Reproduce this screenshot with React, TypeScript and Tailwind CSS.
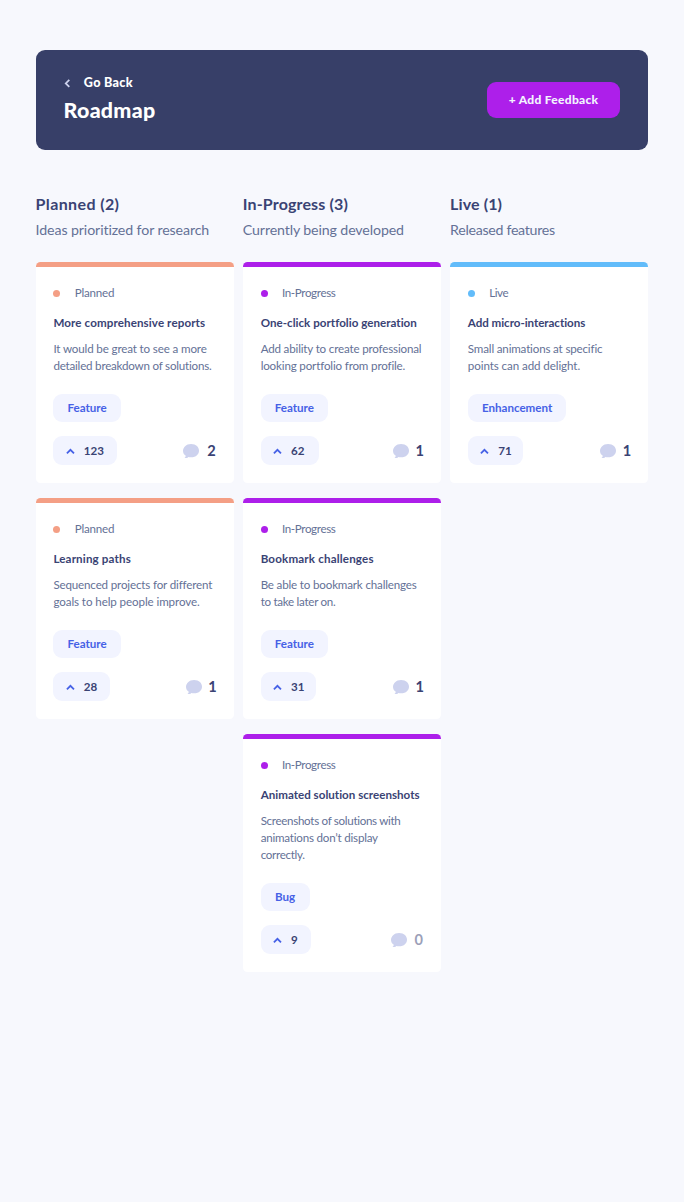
import React from "react";

type Request = {
  title: string;
  titleClass: string;
  lines: [string, string][];
  tag: string;
  tagClass: string;
  votes: number;
  votesClass: string;
  comments: number;
  commentsClass: string;
};

type Column = {
  name: string;
  nameClass: string;
  heading: string;
  headingClass: string;
  note: string;
  noteClass: string;
  bar: string;
  items: Request[];
};

const columns: Column[] = [
  {
    name: "Planned",
    nameClass: "tracking-[-0.2px]",
    heading: "Planned (2)",
    headingClass: "tracking-[0.38px]",
    note: "Ideas prioritized for research",
    noteClass: "tracking-[-0.11px]",
    bar: "bg-[#f49f85]",
    items: [
      {
        title: "More comprehensive reports",
        titleClass: "tracking-[0.11px]",
        lines: [
          ["It would be great to see a more", "tracking-[-0.14px]"],
          ["detailed breakdown of solutions.", "tracking-[-0.21px]"],
        ],
        tag: "Feature",
        tagClass: "w-[67.3px]",
        votes: 123,
        votesClass: "w-[63.3px]",
        comments: 2,
        commentsClass: "w-[9.4px]",
      },
      {
        title: "Learning paths",
        titleClass: "tracking-[0.15px]",
        lines: [
          ["Sequenced projects for different", "tracking-[-0.16px]"],
          ["goals to help people improve.", "tracking-[-0.09px]"],
        ],
        tag: "Feature",
        tagClass: "w-[67.3px]",
        votes: 28,
        votesClass: "w-[57px]",
        comments: 1,
        commentsClass: "w-[7.2px]",
      },
    ],
  },
  {
    name: "In-Progress",
    nameClass: "tracking-[-0.35px]",
    heading: "In-Progress (3)",
    headingClass: "tracking-[0.14px]",
    note: "Currently being developed",
    noteClass: "tracking-[-0.12px]",
    bar: "bg-[#ad1fea]",
    items: [
      {
        title: "One-click portfolio generation",
        titleClass: "tracking-[0.02px]",
        lines: [
          ["Add ability to create professional", "tracking-[-0.17px]"],
          ["looking portfolio from profile.", "tracking-[-0.16px]"],
        ],
        tag: "Feature",
        tagClass: "w-[67.3px]",
        votes: 62,
        votesClass: "w-[58px]",
        comments: 1,
        commentsClass: "w-[7.2px]",
      },
      {
        title: "Bookmark challenges",
        titleClass: "tracking-[0.17px]",
        lines: [
          ["Be able to bookmark challenges", "tracking-[-0.17px]"],
          ["to take later on.", "tracking-[-0.28px]"],
        ],
        tag: "Feature",
        tagClass: "w-[67.3px]",
        votes: 31,
        votesClass: "w-[55.5px]",
        comments: 1,
        commentsClass: "w-[7.2px]",
      },
      {
        title: "Animated solution screenshots",
        titleClass: "tracking-[0.01px]",
        lines: [
          ["Screenshots of solutions with", "tracking-[-0.31px]"],
          ["animations don’t display", "tracking-[-0.21px]"],
          ["correctly.", "tracking-[-0.3px]"],
        ],
        tag: "Bug",
        tagClass: "w-[49px]",
        votes: 9,
        votesClass: "w-[50px]",
        comments: 0,
        commentsClass: "w-[9.4px]",
      },
    ],
  },
  {
    name: "Live",
    nameClass: "tracking-[-0.4px]",
    heading: "Live (1)",
    headingClass: "tracking-[0.12px]",
    note: "Released features",
    noteClass: "tracking-[-0.29px]",
    bar: "bg-[#62bcfa]",
    items: [
      {
        title: "Add micro-interactions",
        titleClass: "tracking-[-0.05px]",
        lines: [
          ["Small animations at specific", "tracking-[-0.17px]"],
          ["points can add delight.", "tracking-[-0.09px]"],
        ],
        tag: "Enhancement",
        tagClass: "w-[98.5px]",
        votes: 71,
        votesClass: "w-[55.3px]",
        comments: 1,
        commentsClass: "w-[7.2px]",
      },
    ],
  },
];

function Card({ item, column }: { item: Request; column: Column }) {
  return (
    <article className="overflow-hidden rounded-[4.5px] bg-white">
      <div className={`h-[5.35px] ${column.bar}`} />
      <div className="px-[17.8px] pt-[18px] pb-[18.1px]">
        <div className="flex h-[16.7px] items-center gap-[14.2px]">
          <span className={`size-[7.1px] rounded-full ${column.bar}`} />
          <span className={`text-[11.6px] leading-[16.7px] text-[#647196] ${column.nameClass}`}>{column.name}</span>
        </div>
        <h3 className={`mt-[12.6px] text-[11.6px] leading-[16.7px] font-bold whitespace-nowrap text-[#3a4374] ${item.titleClass}`}>
          {item.title}
        </h3>
        <p className="mt-[9px] text-[11.6px] leading-[17px] whitespace-nowrap text-[#647196]">
          {item.lines.map(([text, spacing]) => (
            <span key={text} className={`block ${spacing}`}>
              {text}
            </span>
          ))}
        </p>
        <div
          className={`mt-[19.8px] flex h-[27.7px] items-center justify-center rounded-[9px] bg-[#f2f4ff] text-[11.6px] font-bold text-[#4661e6] ${item.tagClass}`}
        >
          {item.tag}
        </div>
        <div className="mt-[14.2px] flex h-[29.4px] items-center justify-between">
          <button
            className={`flex h-full items-center gap-[9px] rounded-[9px] bg-[#f2f4ff] pl-[12.5px] text-[11.6px] font-bold text-[#3a4374] ${item.votesClass}`}
          >
            <svg className="h-[6.2px] w-[8.9px]" viewBox="0 0 10 7" fill="none">
              <path d="M1 6l4-4 4 4" stroke="#4661E6" strokeWidth="2" />
            </svg>
            {item.votes}
          </button>
          <div className="flex items-center gap-[7.4px] pt-[1.2px] text-[14.6px] font-bold text-[#3a4374]">
            <svg className="h-[14.25px] w-4" viewBox="0 0 18 16">
              <path
                d="M2.62 16H1.346l.902-.91c.486-.491.79-1.13.872-1.823C1.036 11.887 0 9.89 0 7.794 0 3.928 3.52 0 9.03 0 14.87 0 18 3.615 18 7.455c0 3.866-3.164 7.478-8.97 7.478-1.017 0-2.078-.137-3.025-.388A4.705 4.705 0 012.62 16z"
                fill="#CDD2EE"
              />
            </svg>
            <span className={`flex justify-center ${item.commentsClass} ${item.comments === 0 ? "opacity-50" : ""}`}>
              {item.comments}
            </span>
          </div>
        </div>
      </div>
    </article>
  );
}

export default function App() {
  return (
    <main className="min-h-[1202px] bg-[#f7f8fd] px-[35.6px] pt-[49.9px] font-['Lato',sans-serif]">
      <header className="flex h-[100.6px] items-center justify-between rounded-[9px] bg-[#373f68] pr-[28.5px] pl-[28px]">
        <div>
          <a className="flex items-center gap-[14px] text-[12.6px] leading-[18px] font-black tracking-[0.3px] text-white">
            <svg className="h-[8.9px] w-[6.2px]" viewBox="0 0 7 10" fill="none">
              <path d="M6 9L2 5l4-4" stroke="#CDD2EE" strokeWidth="2" />
            </svg>
            Go Back
          </a>
          <h1 className="mt-[3px] text-[21.4px] leading-[31px] font-black tracking-[0.27px] text-white">Roadmap</h1>
        </div>
        <button className="h-[36.5px] w-[132.7px] rounded-[9px] bg-[#ad1fea] text-[12px] font-black tracking-[0.3px] whitespace-nowrap text-[#f2f4fe]">
          + Add Feedback
        </button>
      </header>
      <div className="mt-[41.9px] grid grid-cols-3 gap-[8.9px]">
        {columns.map((column) => (
          <section key={column.name}>
            <h2 className={`text-[16px] leading-[23px] font-bold whitespace-nowrap text-[#3a4374] ${column.headingClass}`}>
              {column.heading}
            </h2>
            <p className={`mt-[4.4px] text-[14.2px] leading-[20.6px] whitespace-nowrap text-[#647196] ${column.noteClass}`}>
              {column.note}
            </p>
            <div className="mt-[21.6px] flex flex-col gap-[14.5px]">
              {column.items.map((item) => (
                <Card key={item.title} item={item} column={column} />
              ))}
            </div>
          </section>
        ))}
      </div>
    </main>
  );
}
